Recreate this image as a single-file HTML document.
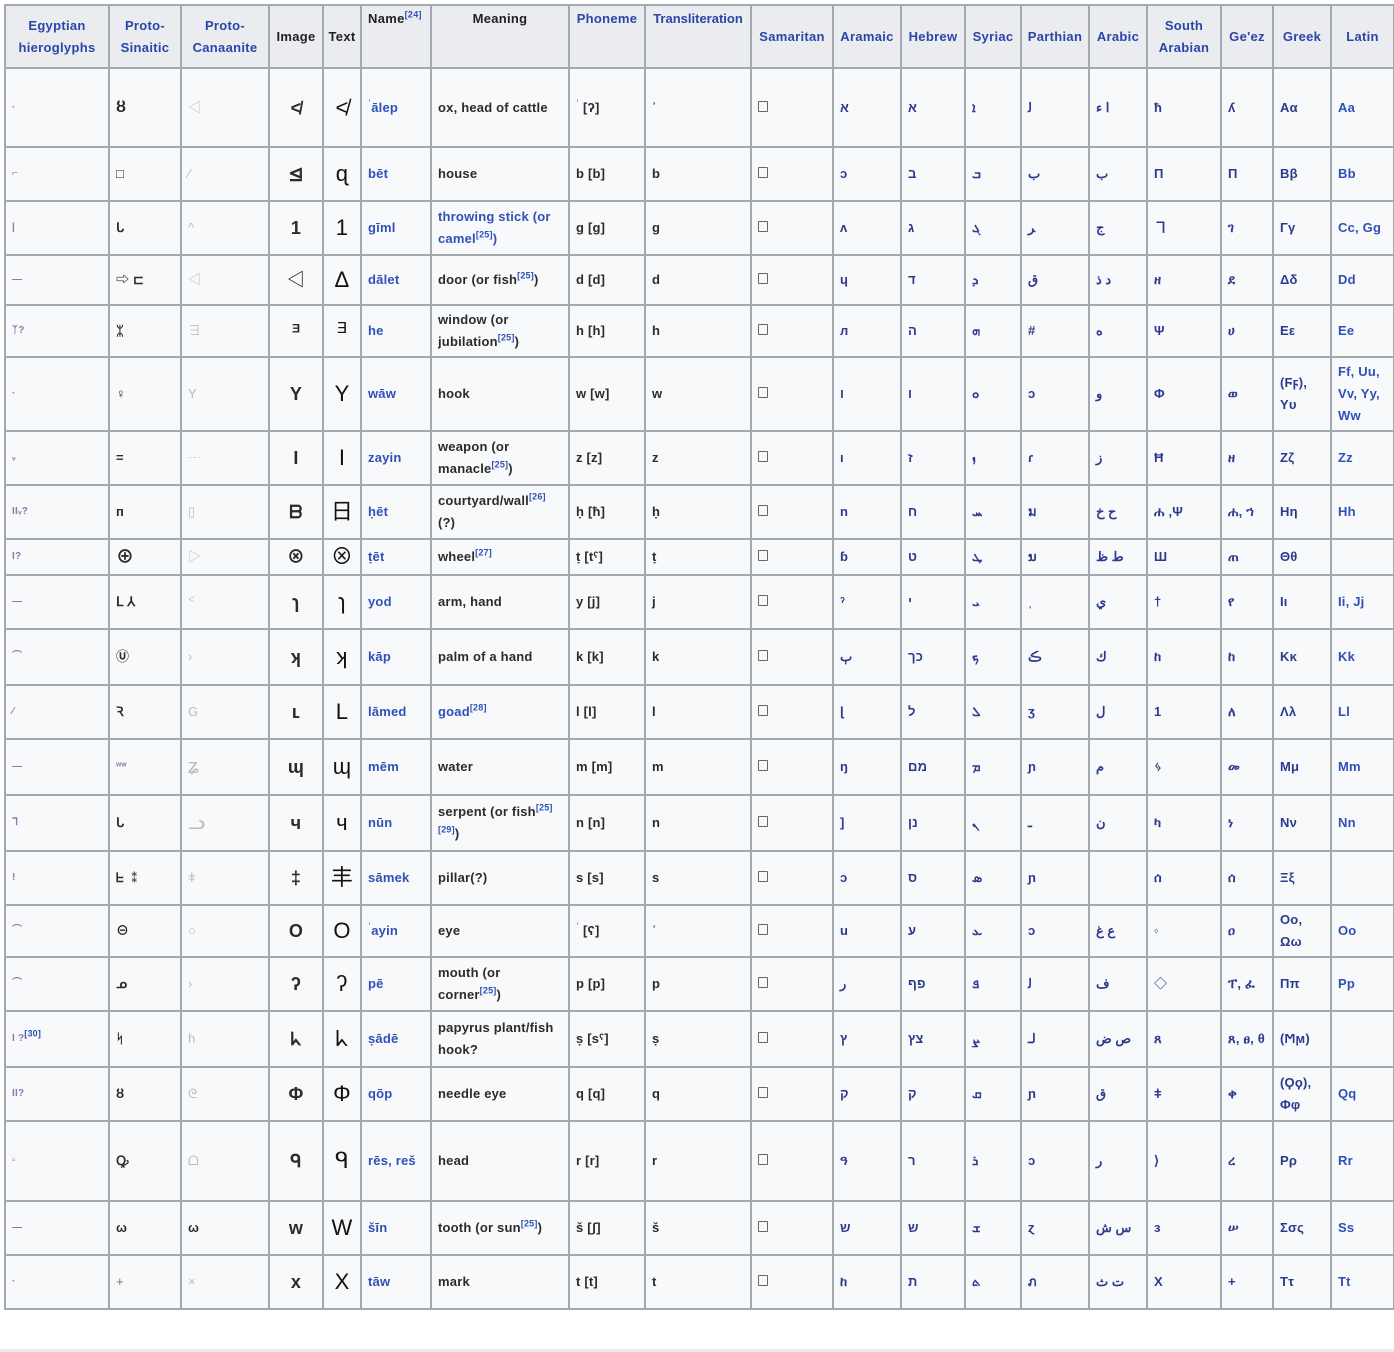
<!DOCTYPE html>
<html><head><meta charset="utf-8">
<style>
html,body{margin:0;padding:0;background:#fff;width:1394px;height:1352px;overflow:hidden}
body{font-family:"Liberation Sans","Noto Sans CJK SC",sans-serif;font-size:13px;font-weight:bold;color:#2b2b2b}
table{position:absolute;left:4px;top:4px;border-collapse:collapse;table-layout:fixed;width:1391px}
td,th{border:2px solid #a2a9b1;background:#f8f9fa;padding:2px 6px;vertical-align:middle;text-align:left;overflow:hidden;line-height:22px;letter-spacing:0.2px}
th{background:#eaecf0;font-weight:bold;text-align:center;line-height:22px;color:#202122;letter-spacing:0.3px}
th.b{color:#2a46a8}
th.t{vertical-align:top}
.n{color:#3050b8}
.l{color:#3050b8}
.s{color:#2b3a8c}
.g{color:#bbb;font-weight:normal}
.img{font-size:18px;font-weight:bold;text-align:center}
.txt{font-size:22px;text-align:center;font-weight:normal;color:#111}
.sq{display:inline-block;width:8px;height:9px;border:1.5px solid #666;border-radius:1px}
sup{font-size:9px;line-height:0;color:#3050b8}
.bot{position:absolute;left:0;top:1349px;width:1394px;height:3px;background:#e9eaec}
.e{color:#8a7ab0;font-size:10px}
</style></head><body>
<table>
<colgroup>
<col style="width:104px"><col style="width:72px"><col style="width:88px"><col style="width:54px"><col style="width:38px"><col style="width:70px"><col style="width:138px"><col style="width:76px"><col style="width:106px"><col style="width:82px"><col style="width:68px"><col style="width:64px"><col style="width:56px"><col style="width:68px"><col style="width:58px"><col style="width:74px"><col style="width:52px"><col style="width:58px"><col style="width:63px">
</colgroup>
<tr style="height:63px"><th class="b">Egyptian hieroglyphs</th><th class="b">Proto-Sinaitic</th><th class="b">Proto-Canaanite</th><th>Image</th><th style="padding:0">Text</th><th class="t" style="text-align:left">Name<sup>[24]</sup></th><th class="t">Meaning</th><th class="b t" style="padding:2px 2px">Phoneme</th><th class="b t" style="padding:2px 2px;letter-spacing:0">Transliteration</th><th class="b" style="padding:2px">Samaritan</th><th class="b" style="padding:2px">Aramaic</th><th class="b" style="padding:2px">Hebrew</th><th class="b" style="padding:2px">Syriac</th><th class="b" style="padding:2px">Parthian</th><th class="b" style="padding:2px">Arabic</th><th class="b">South Arabian</th><th class="b" style="padding:2px">Ge'ez</th><th class="b">Greek</th><th class="b">Latin</th></tr>

<tr style="height:79px"><td class="e">·</td><td style="font-size:16px">ȣ</td><td class="g">◁</td><td class="img">≮</td><td class="txt">≮</td><td class="n"><sup>ʾ</sup>ālep</td><td>ox, head of cattle</td><td><sup>ʾ</sup> [ʔ]</td><td>ʾ</td><td><span class="sq"></span></td><td class="s">א</td><td class="s">א</td><td class="s">ܐ</td><td class="s">ﻟ</td><td class="s">ا ء</td><td class="s">ћ</td><td class="s">ʎ</td><td class="s">Αα</td><td class="l">Aa</td></tr>

<tr style="height:54px"><td class="e">⌐</td><td>□</td><td class="g">⁄</td><td class="img">⊴</td><td class="txt">ɋ</td><td class="n">bēt</td><td>house</td><td>b [b]</td><td>b</td><td><span class="sq"></span></td><td class="s">ɔ</td><td class="s">ב</td><td class="s">ܒ</td><td class="s">ب</td><td class="s">ب</td><td class="s">Π</td><td class="s">Π</td><td class="s">Ββ</td><td class="l">Bb</td></tr>

<tr style="height:54px"><td class="e">|</td><td>ᒐ</td><td class="g">^</td><td class="img">1</td><td class="txt">1</td><td class="n">gīml</td><td class="n">throwing stick (or camel<sup>[25]</sup>)</td><td>g [g]</td><td>g</td><td><span class="sq"></span></td><td class="s">ʌ</td><td class="s">ג</td><td class="s">ܓ</td><td class="s">ﺮ</td><td class="s">ج</td><td class="s">ヿ</td><td class="s">ገ</td><td class="s">Γγ</td><td class="l">Cc, Gg</td></tr>

<tr style="height:50px"><td class="e">—</td><td>⇨ ⊏</td><td class="g">◁</td><td class="img">◁</td><td class="txt">Δ</td><td class="n">dālet</td><td>door (or fish<sup>[25]</sup>)</td><td>d [d]</td><td>d</td><td><span class="sq"></span></td><td class="s">ɥ</td><td class="s">ד</td><td class="s">ܕ</td><td class="s">ﻕ</td><td class="s">د ذ</td><td class="s">ዘ</td><td class="s">ደ</td><td class="s">Δδ</td><td class="l">Dd</td></tr>

<tr style="height:52px"><td class="e">ᛉ?</td><td>ᛯ</td><td class="g">∃</td><td class="img">ᴲ</td><td class="txt">ᴲ</td><td class="n">he</td><td>window (or jubilation<sup>[25]</sup>)</td><td>h [h]</td><td>h</td><td><span class="sq"></span></td><td class="s">ᴫ</td><td class="s">ה</td><td class="s">ܗ</td><td class="s">#</td><td class="s">ه</td><td class="s">Ψ</td><td class="s">ሀ</td><td class="s">Εε</td><td class="l">Ee</td></tr>

<tr style="height:74px"><td class="e">·</td><td>♀</td><td class="g">Y</td><td class="img">Y</td><td class="txt">Y</td><td class="n">wāw</td><td>hook</td><td>w [w]</td><td>w</td><td><span class="sq"></span></td><td class="s">ו</td><td class="s">ו</td><td class="s">ܘ</td><td class="s">ɔ</td><td class="s">و</td><td class="s">Φ</td><td class="s">ወ</td><td class="s">(Ϝϝ), Υυ</td><td class="l">Ff, Uu, Vv, Yy, Ww</td></tr>

<tr style="height:54px"><td class="e">ᵥ</td><td>=</td><td class="g">┄</td><td class="img">I</td><td class="txt">I</td><td class="n">zayin</td><td>weapon (or manacle<sup>[25]</sup>)</td><td>z [z]</td><td>z</td><td><span class="sq"></span></td><td class="s">ı</td><td class="s">ז</td><td class="s">ܙ</td><td class="s">ɾ</td><td class="s">ز</td><td class="s">Ħ</td><td class="s">ዘ</td><td class="s">Ζζ</td><td class="l">Zz</td></tr>

<tr style="height:54px"><td class="e">IIᵥ?</td><td>ᴨ</td><td class="g">▯</td><td class="img">ᗷ</td><td class="txt">日</td><td class="n">ḥēt</td><td>courtyard/wall<sup>[26]</sup> (?)</td><td>ḥ [ħ]</td><td>ḥ</td><td><span class="sq"></span></td><td class="s">n</td><td class="s">ח</td><td class="s">ܚ</td><td class="s">ม</td><td class="s">ح خ</td><td class="s">ሐ ,Ψ</td><td class="s">ሐ, ኀ</td><td class="s">Ηη</td><td class="l">Hh</td></tr>

<tr style="height:36px"><td class="e">I?</td><td class="img" style="text-align:left">⊕</td><td class="g">▷</td><td class="img">⊗</td><td class="txt">⊗</td><td class="n">ṭēt</td><td>wheel<sup>[27]</sup></td><td>ṭ [tˤ]</td><td>ṭ</td><td><span class="sq"></span></td><td class="s">ɓ</td><td class="s">ט</td><td class="s">ܛ</td><td class="s">ນ</td><td class="s">ط ظ</td><td class="s">Ш</td><td class="s">ጠ</td><td class="s">Θθ</td><td class="l"></td></tr>

<tr style="height:54px"><td class="e">—</td><td>ᒪ ⅄</td><td class="g">ᑉ</td><td class="img">ɿ</td><td class="txt">ɿ</td><td class="n">yod</td><td>arm, hand</td><td>y [j]</td><td>j</td><td><span class="sq"></span></td><td class="s">ˀ</td><td class="s">י</td><td class="s">ܝ</td><td class="s">ˌ</td><td class="s">ي</td><td class="s">†</td><td class="s">የ</td><td class="s">Ιι</td><td class="l">Ii, Jj</td></tr>

<tr style="height:56px"><td class="e">⌒</td><td>Ⓤ</td><td class="g">›</td><td class="img">ʞ</td><td class="txt">ʞ</td><td class="n">kāp</td><td>palm of a hand</td><td>k [k]</td><td>k</td><td><span class="sq"></span></td><td class="s">ٻ</td><td class="s">כך</td><td class="s">ܟ</td><td class="s">ڪ</td><td class="s">ك</td><td class="s">ከ</td><td class="s">ከ</td><td class="s">Κκ</td><td class="l">Kk</td></tr>

<tr style="height:54px"><td class="e">⁄</td><td>Ꝛ</td><td class="g">G</td><td class="img">ʟ</td><td class="txt">L</td><td class="n">lāmed</td><td class="n">goad<sup>[28]</sup></td><td>l [l]</td><td>l</td><td><span class="sq"></span></td><td class="s">ɭ</td><td class="s">ל</td><td class="s">ܠ</td><td class="s">ʒ</td><td class="s">ل</td><td class="s">1</td><td class="s">ለ</td><td class="s">Λλ</td><td class="l">Ll</td></tr>

<tr style="height:56px"><td class="e">—</td><td class="e">ʷʷ</td><td class="g" style="font-size:20px">ʑ</td><td class="img">ɰ</td><td class="txt">ɰ</td><td class="n">mēm</td><td>water</td><td>m [m]</td><td>m</td><td><span class="sq"></span></td><td class="s">ŋ</td><td class="s">מם</td><td class="s">ܡ</td><td class="s">ɲ</td><td class="s">م</td><td class="s">ᛃ</td><td class="s">መ</td><td class="s">Μμ</td><td class="l">Mm</td></tr>

<tr style="height:56px"><td class="e">ᒣ</td><td>ᒐ</td><td class="g" style="font-size:20px">ᓗ</td><td class="img">ч</td><td class="txt">ч</td><td class="n">nūn</td><td>serpent (or fish<sup>[25][29]</sup>)</td><td>n [n]</td><td>n</td><td><span class="sq"></span></td><td class="s">]</td><td class="s">נן</td><td class="s">ܢ</td><td class="s">ـ</td><td class="s">ن</td><td class="s">ካ</td><td class="s">ነ</td><td class="s">Νν</td><td class="l">Nn</td></tr>

<tr style="height:54px"><td class="e">!</td><td>ᖶ ⁑</td><td class="g">ǂ</td><td class="img">‡</td><td class="txt">丰</td><td class="n">sāmek</td><td>pillar(?)</td><td>s [s]</td><td>s</td><td><span class="sq"></span></td><td class="s">ɔ</td><td class="s">ס</td><td class="s">ܣ</td><td class="s">ɲ</td><td class="s"></td><td class="s">ሰ</td><td class="s">ሰ</td><td class="s">Ξξ</td><td class="l"></td></tr>

<tr style="height:52px"><td class="e">⌒</td><td>⊖</td><td class="g">○</td><td class="img">O</td><td class="txt">O</td><td class="n"><sup>ʿ</sup>ayin</td><td>eye</td><td><sup>ʿ</sup> [ʕ]</td><td>ʿ</td><td><span class="sq"></span></td><td class="s">u</td><td class="s">ע</td><td class="s">ܥ</td><td class="s">ɔ</td><td class="s">ع غ</td><td class="s">◦</td><td class="s">ዐ</td><td class="s">Οο, Ωω</td><td class="l">Oo</td></tr>

<tr style="height:54px"><td class="e">⌒</td><td>ᓄ</td><td class="g">›</td><td class="img">ʔ</td><td class="txt">ʔ</td><td class="n">pē</td><td>mouth (or corner<sup>[25]</sup>)</td><td>p [p]</td><td>p</td><td><span class="sq"></span></td><td class="s">ﺭ</td><td class="s">פף</td><td class="s">ܦ</td><td class="s">ﻟ</td><td class="s">ف</td><td class="s">◇</td><td class="s">ፐ, ፈ</td><td class="s">Ππ</td><td class="l">Pp</td></tr>

<tr style="height:56px"><td class="e">I ?<sup>[30]</sup></td><td>ᛋ</td><td class="g">ɦ</td><td class="img">ᖾ</td><td class="txt">ᖾ</td><td class="n">ṣādē</td><td>papyrus plant/fish hook?</td><td>ṣ [sˤ]</td><td>ṣ</td><td><span class="sq"></span></td><td class="s">ץ</td><td class="s">צץ</td><td class="s">ܨ</td><td class="s">ﻟـ</td><td class="s">ص ض</td><td class="s">ጸ</td><td class="s">ጸ, ፀ, θ</td><td class="s">(Ϻϻ)</td><td class="l"></td></tr>

<tr style="height:54px"><td class="e">II?</td><td>ȣ</td><td class="g">ᘓ</td><td class="img">Φ</td><td class="txt">Φ</td><td class="n">qōp</td><td>needle eye</td><td>q [q]</td><td>q</td><td><span class="sq"></span></td><td class="s">ק</td><td class="s">ק</td><td class="s">ܩ</td><td class="s">ɲ</td><td class="s">ق</td><td class="s">ǂ</td><td class="s">ቀ</td><td class="s">(Ϙϙ), Φφ</td><td class="l">Qq</td></tr>

<tr style="height:80px"><td class="e">▫</td><td>Ꝙ</td><td class="g">ᗝ</td><td class="img">ᑫ</td><td class="txt">ᑫ</td><td class="n">rēs, reš</td><td>head</td><td>r [r]</td><td>r</td><td><span class="sq"></span></td><td class="s">ዓ</td><td class="s">ר</td><td class="s">ܪ</td><td class="s">ɔ</td><td class="s">ر</td><td class="s">⟩</td><td class="s">ረ</td><td class="s">Ρρ</td><td class="l">Rr</td></tr>

<tr style="height:54px"><td class="e">—</td><td>ω</td><td>ω</td><td class="img">w</td><td class="txt">W</td><td class="n">šīn</td><td>tooth (or sun<sup>[25]</sup>)</td><td>š [ʃ]</td><td>š</td><td><span class="sq"></span></td><td class="s">ש</td><td class="s">ש</td><td class="s">ܫ</td><td class="s">ɀ</td><td class="s">س ش</td><td class="s">ɜ</td><td class="s">ሠ</td><td class="s">Σσς</td><td class="l">Ss</td></tr>

<tr style="height:54px"><td class="e">·</td><td class="g" style="color:#777">+</td><td class="g">×</td><td class="img">x</td><td class="txt">X</td><td class="n">tāw</td><td>mark</td><td>t [t]</td><td>t</td><td><span class="sq"></span></td><td class="s">ከ</td><td class="s">ת</td><td class="s">ܬ</td><td class="s">ภ</td><td class="s">ت ث</td><td class="s">X</td><td class="s">+</td><td class="s">Ττ</td><td class="l">Tt</td></tr>
</table>
<div class="bot"></div>
</body></html>
